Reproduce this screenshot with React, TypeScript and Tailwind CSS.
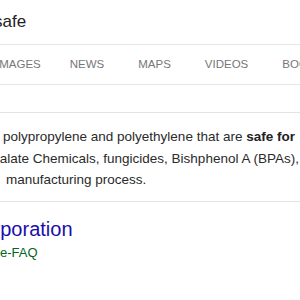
const tabs = [
  { label: 'IMAGES', gap: 'mr-[29px]' },
  { label: 'NEWS', gap: 'mr-[34px]' },
  { label: 'MAPS', gap: 'mr-[34px]' },
  { label: 'VIDEOS', gap: 'mr-[34px]' },
  { label: 'BOOKS', gap: 'mr-[34px]' },
];

const App = () => {
  return (
    <div className="w-[300px] h-[300px] overflow-hidden bg-white font-['Liberation_Sans',Arial,sans-serif]">
      <div className="h-[45px] flex items-center border-b border-[#e6e6e6] whitespace-nowrap">
        <span className="-ml-[6px] text-[17px] text-[#222]">safe</span>
      </div>
      <div className="h-[40px] flex items-center border-b border-[#e6e6e6] whitespace-nowrap text-[11.5px] text-[#777] -ml-[4px]">
        {tabs.map((tab) => (
          <span key={tab.label} className={`shrink-0 ${tab.gap}`}>
            {tab.label}
          </span>
        ))}
      </div>
      <div className="h-[27px]" />
      <div className="border-t border-[#e3e3e3] pt-[13px] pb-[10px] border-b text-[13.5px] leading-[21.5px] text-[#2a2a2a] whitespace-nowrap">
        <div className="ml-[3px]">
          polypropylene and polyethylene that are <b className="text-[#222]">safe for</b>
        </div>
        <div className="-ml-[28px]">
          Phthalate Chemicals, fungicides, Bishphenol A (BPAs),
        </div>
        <div className="ml-[6px]">manufacturing process.</div>
      </div>
      <div className="pt-[14px] whitespace-nowrap">
        <div className="-ml-[32px] text-[20px] leading-[26px] text-[#1a0dab]">
          Corporation
        </div>
        <div className="text-[13px] leading-[22px] text-[#006621]">e-FAQ</div>
      </div>
    </div>
  );
};

export default App;
